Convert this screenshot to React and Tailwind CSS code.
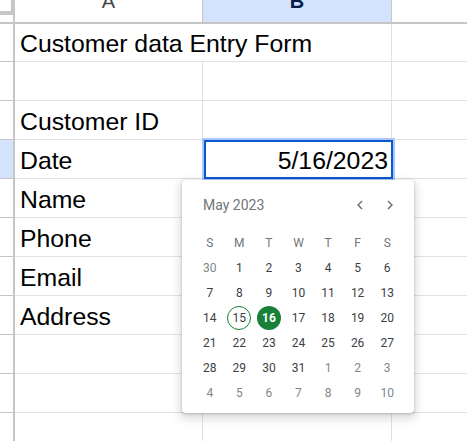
import React from "react";

const rows = [
  { a: "Customer data Entry Form", overflow: true },
  { a: "" },
  { a: "Customer ID" },
  { a: "Date", b: "5/16/2023", hl: true },
  { a: "Name" },
  { a: "Phone" },
  { a: "Email" },
  { a: "Address" },
  { a: "" },
  { a: "" },
  { a: "" },
];

const weeks = [
  [[30, 1], [1], [2], [3], [4], [5], [6]],
  [[7], [8], [9], [10], [11], [12], [13]],
  [[14], [15], [16], [17], [18], [19], [20]],
  [[21], [22], [23], [24], [25], [26], [27]],
  [[28], [29], [30], [31], [1, 1], [2, 1], [3, 1]],
  [[4, 1], [5, 1], [6, 1], [7, 1], [8, 1], [9, 1], [10, 1]],
];

function Chevron({ dir }) {
  return (
    <svg width="18" height="18" viewBox="0 0 24 24" fill="#70757a">
      {dir === "left" ? (
        <path d="M15.41 7.41L14 6l-6 6 6 6 1.41-1.41L10.83 12z" />
      ) : (
        <path d="M8.59 16.59L10 18l6-6-6-6-1.41 1.41L13.17 12z" />
      )}
    </svg>
  );
}

function Calendar() {
  return (
    <div className="absolute left-[182px] top-[180px] w-[232px] h-[233px] bg-white rounded-[4px] shadow-[0_1px_3px_rgba(60,64,67,0.3),0_4px_8px_3px_rgba(60,64,67,0.15)] font-['Roboto',sans-serif]">
      <div className="h-[50px] flex items-center pl-[21px] pr-[9px]">
        <span className="text-[14px] text-[#70757a] flex-1">May 2023</span>
        <div className="w-[30px] h-[30px] flex items-center justify-center">
          <Chevron dir="left" />
        </div>
        <div className="w-[30px] h-[30px] flex items-center justify-center">
          <Chevron dir="right" />
        </div>
      </div>
      <div className="ml-[13px] w-[207px] grid grid-cols-7">
        {["S", "M", "T", "W", "T", "F", "S"].map((d, i) => (
          <div key={i} className="h-[25px] flex items-center justify-center text-[12px] text-[#70757a]">
            {d}
          </div>
        ))}
        {weeks.flat().map(([n, other], i) => {
          let cls = "w-[24px] h-[24px] rounded-full flex items-center justify-center text-[12px] ";
          if (n === 15 && !other) cls += "border border-[#188038] text-[#3c4043]";
          else if (n === 16 && !other) cls += "bg-[#188038] text-white font-bold";
          else if (other) cls += "text-[#80868b]";
          else cls += "text-[#3c4043]";
          return (
            <div key={i} className="h-[25px] flex items-center justify-center">
              <div className={cls}>{n}</div>
            </div>
          );
        })}
      </div>
    </div>
  );
}

export default function App() {
  return (
    <div className="relative w-[467px] h-[441px] overflow-hidden bg-white font-['Liberation_Sans',Arial,sans-serif]">
      {/* header row */}
      <div className="flex h-[24px]">
        <div className="w-[15px] h-[24px] border-r-2 border-b-2 border-[#c4c7c5]">
          <div className="w-[13px] h-[15px] border-r-2 border-b-4 border-[#c4c7c5]" />
        </div>
        <div className="w-[188px] h-[24px] border-r border-b-2 border-[#c4c7c5] flex justify-center items-end pb-[11px] overflow-hidden">
          <span className="text-[20px] leading-[20px] text-[#444746]">A</span>
        </div>
        <div className="w-[189px] h-[24px] border-r border-b-2 border-[#c4c7c5] bg-[#d3e3fd] flex justify-center items-end pb-[11px] overflow-hidden">
          <span className="text-[20px] leading-[20px] font-bold text-[#041e49]">B</span>
        </div>
        <div className="flex-1 h-[24px] border-b-2 border-[#c4c7c5]" />
      </div>

      {rows.map((r, i) => (
        <div key={i} className={`flex ${i === 0 ? "h-[38px]" : "h-[39px]"}`}>
          <div
            className={`w-[15px] h-full border-r-2 border-b border-[#c4c7c5] ${
              r.hl ? "bg-[#d3e3fd]" : "bg-white"
            }`}
          />
          <div
            className={`w-[188px] h-full border-b border-[#e1e1e1] flex items-end pl-[5px] pb-[3px] ${
              r.overflow ? "relative z-10" : "border-r"
            }`}
          >
            <span className="text-[24.8px] leading-[28px] text-black whitespace-nowrap">{r.a}</span>
          </div>
          <div className="w-[189px] h-full border-r border-b border-[#e1e1e1] flex items-end justify-end pr-[3px] pb-[3px]">
            {r.b && <span className="text-[24.8px] leading-[28px] text-black whitespace-nowrap">{r.b}</span>}
          </div>
          <div className="flex-1 h-full border-b border-[#e1e1e1]" />
        </div>
      ))}

      {/* selected cell outline */}
      <div className="absolute left-[204px] top-[140px] w-[189px] h-[39px] border-2 border-[#0b57d0] shadow-[0_0_0_2px_#a8c7fa]" />

      <Calendar />
    </div>
  );
}
